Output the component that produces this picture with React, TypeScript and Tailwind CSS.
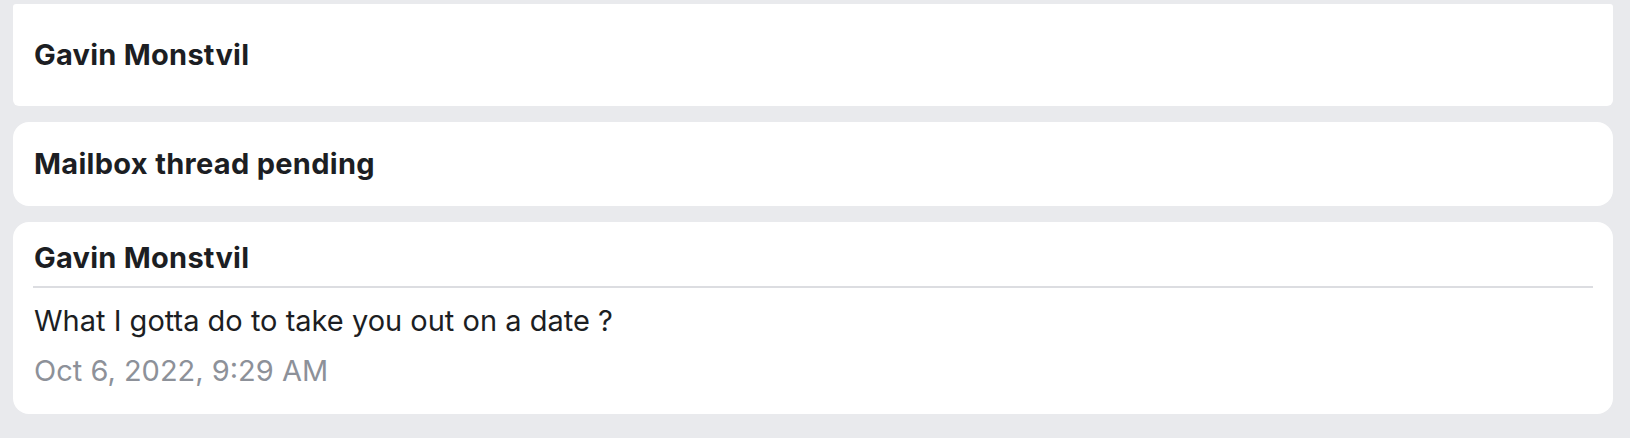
import React from "react"

const font = { fontFamily: "Inter, 'Noto Sans', sans-serif" }

export default function App() {
  return (
    <div
      className="w-full h-[438px] bg-[#e9eaed] pl-[13px] pr-[17px] pt-[4px] flex flex-col overflow-hidden"
      style={font}
    >
      {/* Contact card */}
      <div className="h-[102px] bg-white rounded-b-[6px] rounded-t-[3px] px-[21px] pt-[33px]">
        <div className="text-[29px] leading-[36px] font-bold tracking-[0.25px] text-[#1c1e23]">Gavin Monstvil</div>
      </div>

      {/* Status card */}
      <div className="mt-[16px] h-[84px] bg-white rounded-[16px] px-[21px] flex items-center">
        <div className="text-[29px] leading-[36px] font-bold tracking-[0.3px] text-[#1c1e23]">Mailbox thread pending</div>
      </div>

      {/* Message card */}
      <div className="mt-[16px] h-[192px] bg-white rounded-[16px] px-[20px] pt-[18px]">
        <div className="px-[1px] text-[29px] leading-[36px] font-bold tracking-[0.25px] text-[#1c1e23]">Gavin Monstvil</div>
        <div className="mt-[10px] h-[2px] bg-[#dcdde1]" />
        <div className="mt-[15px] px-[1px] text-[29px] leading-[36px] text-[#1c1e23]">
          What I gotta do to take you out on a date ?
        </div>
        <div className="mt-[14px] px-[1px] text-[29px] leading-[36px] text-[#8d9199]">Oct 6, 2022, 9:29 AM</div>
      </div>
    </div>
  )
}
